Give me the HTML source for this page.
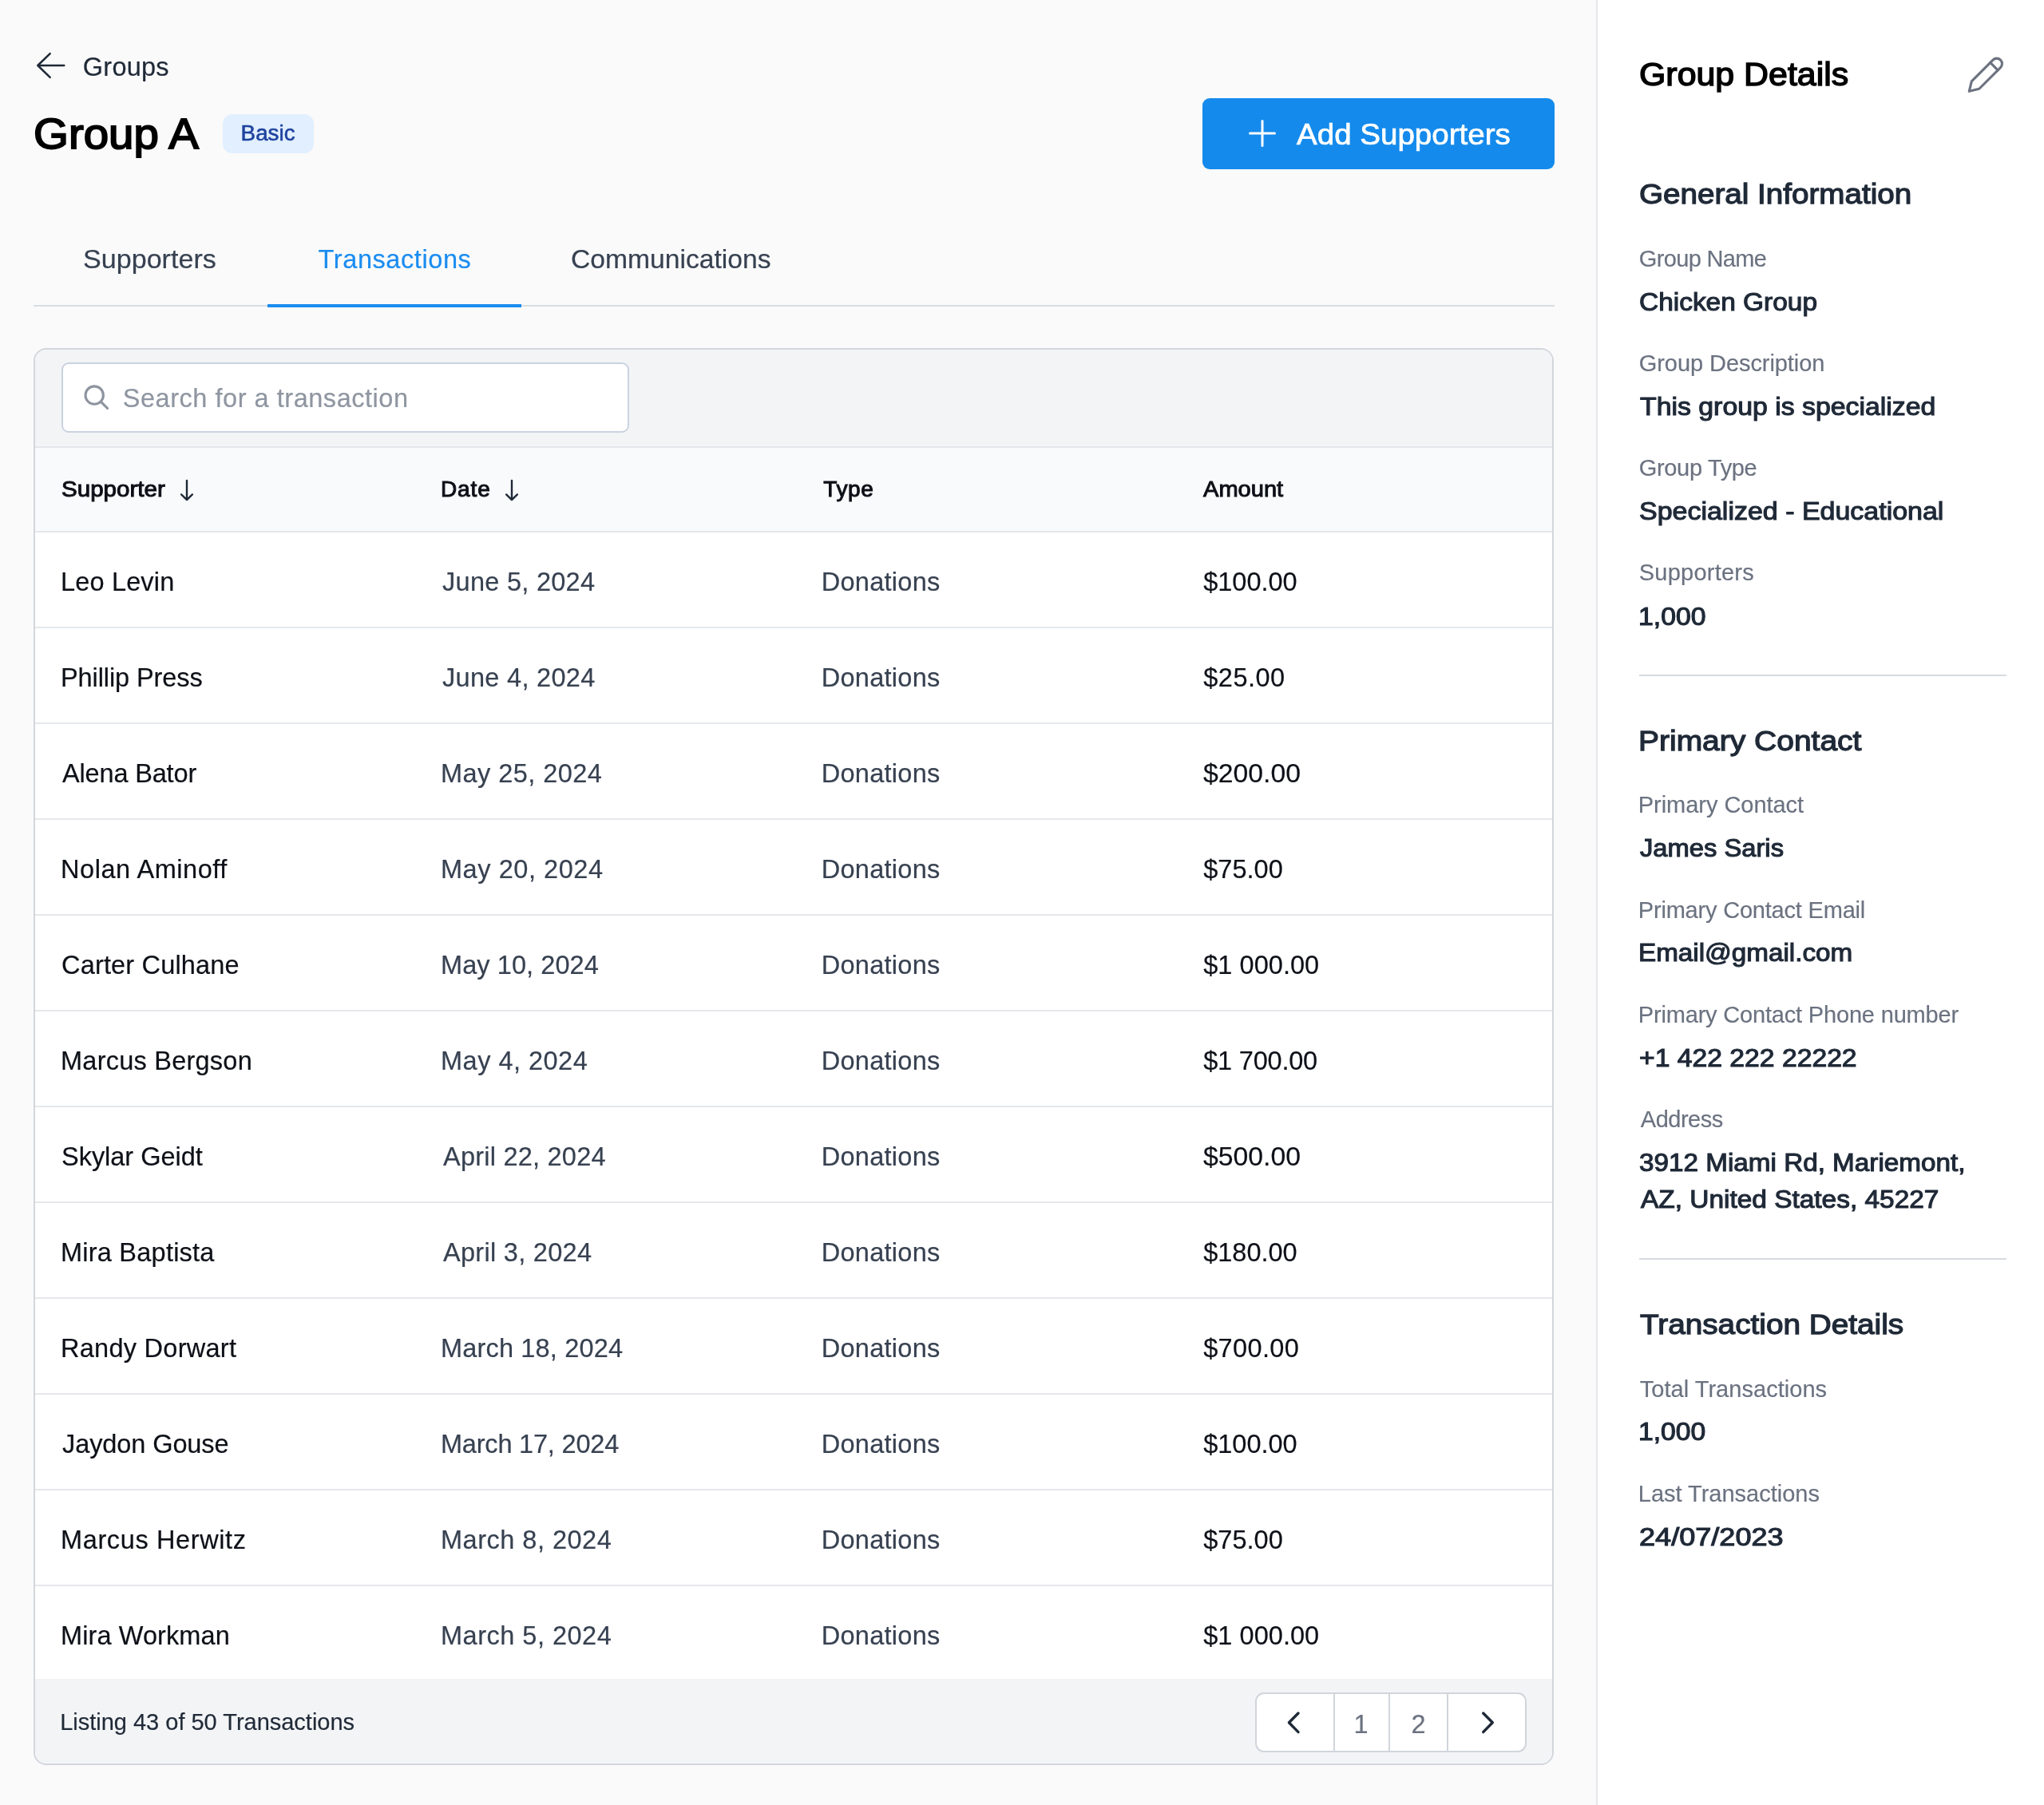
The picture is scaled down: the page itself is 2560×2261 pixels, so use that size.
<!DOCTYPE html>
<html lang="en"><head><meta charset="utf-8"><title>Group A - Transactions</title>
<style>
*{box-sizing:border-box;margin:0;padding:0}
html,body{width:2560px;height:2261px;overflow:hidden}
body{position:relative;background:#fafafa;font-family:"Liberation Sans",sans-serif}
.page{position:absolute;left:0;top:0;width:2560px;height:2261px;will-change:transform}
.page div,.page nav,.page main,.page aside,.page section,.page header{position:absolute}
.t{position:absolute;display:block;white-space:pre;line-height:1;font-weight:400;font-kerning:normal;transform-origin:0 50%}
svg{position:absolute;overflow:visible}
.main{left:0;top:0;width:1999px;height:2261px}
.badge{left:279px;top:143px;width:114px;height:49px;border-radius:12px;background:#e1effe}
.btn{left:1506px;top:123px;width:441px;height:89px;border-radius:9px;background:#148aec}
.tabs{left:42px;top:280px;width:1905px;height:104px;border-bottom:2px solid #d9dde2}
.tabs i{position:absolute;left:293px;top:101px;width:318px;height:4px;background:#1a8cf0}
.card{left:42px;top:436px;width:1904px;height:1775px;border:2px solid #d2d6dc;border-radius:16px;background:#fff;overflow:hidden}
.toolbar{left:0;top:0;width:1900px;height:123px;background:#f3f4f6;border-bottom:2px solid #e3e6ea}
.search{left:33px;top:16px;width:711px;height:88px;border:2px solid #c9d3e0;border-radius:9px;background:#fff}
.thead{left:0;top:123px;width:1900px;height:106px;background:#f9fafb;border-bottom:2px solid #e5e7eb}
.row{left:0;width:1900px;height:120px;border-bottom:2px solid #e5e7eb;background:#fff}
.tfoot{left:0;top:1665px;width:1900px;height:110px;background:#f3f4f6}
.pager{left:1528px;top:17px;width:340px;height:75px;border:2px solid #d1d5db;border-radius:11px;background:#fff;overflow:hidden}
.pager i{position:absolute;top:0;width:2px;height:71px;background:#d1d5db}
.sidebar{left:1999px;top:0;width:561px;height:2261px;background:#fff;border-left:2px solid #e5e7eb}
.sidebar hr{position:absolute;left:52px;width:460px;height:2px;border:0;background:#d7dbe0}
</style></head><body><div class="page">
<main class="main">
<svg class="ic" style="left:44px;top:64px" width="40" height="36" viewBox="44 64 40 36" fill="none" stroke="#1f2937" stroke-width="2.5" stroke-linecap="round" stroke-linejoin="round"><path d="M80.3 82H47.3M62.7 67.2L47.3 82l15.4 14.8"/></svg>
<span class="t" style="left:103.8px;top:66px;font-size:32.5px;line-height:36px;color:#1f2937;-webkit-text-stroke:0.20px #1f2937;letter-spacing:0.24px;">Groups</span><h1 class="t" style="left:42.0px;top:137px;font-size:54.25px;line-height:61px;color:#000;-webkit-text-stroke:1.95px #000;transform:scaleX(1.0400);">Group A</h1>
<div class="badge"><span class="t" style="left:22.6px;top:8px;font-size:27.75px;line-height:31px;color:#1e429f;-webkit-text-stroke:0.56px #1e429f;letter-spacing:0.04px;">Basic</span></div>
<div class="btn"><svg class="ic" style="left:56px;top:25px" width="38" height="38" viewBox="1562 148 38 38" fill="none" stroke="#fff" stroke-width="3" stroke-linecap="round" stroke-linejoin="round"><path d="M1565.5 167h31M1581 151.5v31"/></svg><span class="t" style="left:118.2px;top:25px;font-size:36px;line-height:41px;color:#fff;-webkit-text-stroke:0.72px #fff;transform:scaleX(1.0705);">Add Supporters</span></div>
<nav class="tabs"><span class="t" style="left:62.0px;top:27px;font-size:32.5px;line-height:36px;color:#374151;-webkit-text-stroke:0.20px #374151;transform:scaleX(1.0493);">Supporters</span><span class="t" style="left:356.6px;top:27px;font-size:32.5px;line-height:36px;color:#1a8cf0;-webkit-text-stroke:0.20px #1a8cf0;letter-spacing:0.58px;">Transactions</span><span class="t" style="left:673.0px;top:27px;font-size:32.5px;line-height:36px;color:#374151;-webkit-text-stroke:0.20px #374151;transform:scaleX(1.0354);">Communications</span><i></i></nav>
<section class="card">
<div class="toolbar"><div class="search"><svg class="ic" style="left:25px;top:25px" width="34" height="34" viewBox="104 481 34 34" fill="none" stroke="#8e949f" stroke-width="3.1" stroke-linecap="round" stroke-linejoin="round"><circle cx="118.2" cy="495.1" r="11.2"/><path d="M126.3 503.2l8.3 8.3"/></svg><span class="t" style="left:74.8px;top:25px;font-size:32.5px;line-height:36px;color:#8f96a1;-webkit-text-stroke:0.20px #8f96a1;letter-spacing:0.53px;">Search for a transaction</span></div></div>
<div class="thead"><span class="t" style="left:33.0px;top:36px;font-size:28px;line-height:31px;color:#0d1017;-webkit-text-stroke:1.01px #0d1017;transform:scaleX(1.0556);">Supporter</span><span class="t" style="left:508.0px;top:36px;font-size:28px;line-height:31px;color:#0d1017;-webkit-text-stroke:1.01px #0d1017;letter-spacing:0.88px;">Date</span><span class="t" style="left:987.2px;top:36px;font-size:28px;line-height:31px;color:#0d1017;-webkit-text-stroke:1.01px #0d1017;letter-spacing:0.63px;">Type</span><span class="t" style="left:1463.0px;top:36px;font-size:28px;line-height:31px;color:#0d1017;-webkit-text-stroke:1.01px #0d1017;transform:scaleX(1.0384);">Amount</span><svg class="ic" style="left:179.7px;top:39px" width="20" height="29" viewBox="223.7 600 20 29" fill="none" stroke="#1f2937" stroke-width="2.4" stroke-linecap="round" stroke-linejoin="round"><path d="M233.7 602v24M226.8 619.4l6.9 6.8 6.9-6.8"/></svg><svg class="ic" style="left:587.4px;top:39px" width="20" height="29" viewBox="631.4 600 20 29" fill="none" stroke="#1f2937" stroke-width="2.4" stroke-linecap="round" stroke-linejoin="round"><path d="M641.4 602v24M634.5 619.4l6.9 6.8 6.9-6.8"/></svg></div>
<div class="row" style="top:229px"><span class="t" style="left:32.0px;top:44px;font-size:32.5px;line-height:36px;color:#0d1017;-webkit-text-stroke:0.20px #0d1017;letter-spacing:0.16px;">Leo Levin</span><span class="t" style="left:510.0px;top:44px;font-size:32.5px;line-height:36px;color:#374151;-webkit-text-stroke:0.20px #374151;letter-spacing:0.28px;">June 5, 2024</span><span class="t" style="left:984.8px;top:44px;font-size:32.5px;line-height:36px;color:#374151;-webkit-text-stroke:0.20px #374151;letter-spacing:0.26px;">Donations</span><span class="t" style="left:1463.2px;top:44px;font-size:32.5px;line-height:36px;color:#0d1017;-webkit-text-stroke:0.20px #0d1017;letter-spacing:-0.01px;">$100.00</span></div>
<div class="row" style="top:349px"><span class="t" style="left:32.0px;top:44px;font-size:32.5px;line-height:36px;color:#0d1017;-webkit-text-stroke:0.20px #0d1017;letter-spacing:-0.09px;">Phillip Press</span><span class="t" style="left:510.0px;top:44px;font-size:32.5px;line-height:36px;color:#374151;-webkit-text-stroke:0.20px #374151;letter-spacing:0.30px;">June 4, 2024</span><span class="t" style="left:984.8px;top:44px;font-size:32.5px;line-height:36px;color:#374151;-webkit-text-stroke:0.20px #374151;letter-spacing:0.26px;">Donations</span><span class="t" style="left:1463.2px;top:44px;font-size:32.5px;line-height:36px;color:#0d1017;-webkit-text-stroke:0.20px #0d1017;letter-spacing:0.52px;">$25.00</span></div>
<div class="row" style="top:469px"><span class="t" style="left:34.0px;top:44px;font-size:32.5px;line-height:36px;color:#0d1017;-webkit-text-stroke:0.20px #0d1017;letter-spacing:-0.16px;">Alena Bator</span><span class="t" style="left:508.0px;top:44px;font-size:32.5px;line-height:36px;color:#374151;-webkit-text-stroke:0.20px #374151;letter-spacing:0.44px;">May 25, 2024</span><span class="t" style="left:984.8px;top:44px;font-size:32.5px;line-height:36px;color:#374151;-webkit-text-stroke:0.20px #374151;letter-spacing:0.26px;">Donations</span><span class="t" style="left:1463.2px;top:44px;font-size:32.5px;line-height:36px;color:#0d1017;-webkit-text-stroke:0.20px #0d1017;transform:scaleX(1.0385);">$200.00</span></div>
<div class="row" style="top:589px"><span class="t" style="left:32.0px;top:44px;font-size:32.5px;line-height:36px;color:#0d1017;-webkit-text-stroke:0.20px #0d1017;letter-spacing:0.55px;">Nolan Aminoff</span><span class="t" style="left:508.0px;top:44px;font-size:32.5px;line-height:36px;color:#374151;-webkit-text-stroke:0.20px #374151;letter-spacing:0.55px;">May 20, 2024</span><span class="t" style="left:984.8px;top:44px;font-size:32.5px;line-height:36px;color:#374151;-webkit-text-stroke:0.20px #374151;letter-spacing:0.26px;">Donations</span><span class="t" style="left:1463.2px;top:44px;font-size:32.5px;line-height:36px;color:#0d1017;-webkit-text-stroke:0.20px #0d1017;letter-spacing:0.04px;">$75.00</span></div>
<div class="row" style="top:709px"><span class="t" style="left:33.0px;top:44px;font-size:32.5px;line-height:36px;color:#0d1017;-webkit-text-stroke:0.20px #0d1017;letter-spacing:0.17px;">Carter Culhane</span><span class="t" style="left:508.0px;top:44px;font-size:32.5px;line-height:36px;color:#374151;-webkit-text-stroke:0.20px #374151;letter-spacing:0.08px;">May 10, 2024</span><span class="t" style="left:984.8px;top:44px;font-size:32.5px;line-height:36px;color:#374151;-webkit-text-stroke:0.20px #374151;letter-spacing:0.26px;">Donations</span><span class="t" style="left:1463.2px;top:44px;font-size:32.5px;line-height:36px;color:#0d1017;-webkit-text-stroke:0.20px #0d1017;letter-spacing:0.05px;">$1 000.00</span></div>
<div class="row" style="top:829px"><span class="t" style="left:32.0px;top:44px;font-size:32.5px;line-height:36px;color:#0d1017;-webkit-text-stroke:0.20px #0d1017;letter-spacing:0.24px;">Marcus Bergson</span><span class="t" style="left:508.0px;top:44px;font-size:32.5px;line-height:36px;color:#374151;-webkit-text-stroke:0.20px #374151;letter-spacing:0.49px;">May 4, 2024</span><span class="t" style="left:984.8px;top:44px;font-size:32.5px;line-height:36px;color:#374151;-webkit-text-stroke:0.20px #374151;letter-spacing:0.26px;">Donations</span><span class="t" style="left:1463.2px;top:44px;font-size:32.5px;line-height:36px;color:#0d1017;-webkit-text-stroke:0.20px #0d1017;letter-spacing:-0.20px;">$1 700.00</span></div>
<div class="row" style="top:949px"><span class="t" style="left:33.0px;top:44px;font-size:32.5px;line-height:36px;color:#0d1017;-webkit-text-stroke:0.20px #0d1017;letter-spacing:-0.02px;">Skylar Geidt</span><span class="t" style="left:511.0px;top:44px;font-size:32.5px;line-height:36px;color:#374151;-webkit-text-stroke:0.20px #374151;letter-spacing:0.23px;">April 22, 2024</span><span class="t" style="left:984.8px;top:44px;font-size:32.5px;line-height:36px;color:#374151;-webkit-text-stroke:0.20px #374151;letter-spacing:0.26px;">Donations</span><span class="t" style="left:1463.2px;top:44px;font-size:32.5px;line-height:36px;color:#0d1017;-webkit-text-stroke:0.20px #0d1017;transform:scaleX(1.0385);">$500.00</span></div>
<div class="row" style="top:1069px"><span class="t" style="left:32.0px;top:44px;font-size:32.5px;line-height:36px;color:#0d1017;-webkit-text-stroke:0.20px #0d1017;letter-spacing:0.23px;">Mira Baptista</span><span class="t" style="left:511.0px;top:44px;font-size:32.5px;line-height:36px;color:#374151;-webkit-text-stroke:0.20px #374151;letter-spacing:0.29px;">April 3, 2024</span><span class="t" style="left:984.8px;top:44px;font-size:32.5px;line-height:36px;color:#374151;-webkit-text-stroke:0.20px #374151;letter-spacing:0.26px;">Donations</span><span class="t" style="left:1463.2px;top:44px;font-size:32.5px;line-height:36px;color:#0d1017;-webkit-text-stroke:0.20px #0d1017;letter-spacing:-0.01px;">$180.00</span></div>
<div class="row" style="top:1189px"><span class="t" style="left:32.0px;top:44px;font-size:32.5px;line-height:36px;color:#0d1017;-webkit-text-stroke:0.20px #0d1017;letter-spacing:0.27px;">Randy Dorwart</span><span class="t" style="left:508.0px;top:44px;font-size:32.5px;line-height:36px;color:#374151;-webkit-text-stroke:0.20px #374151;letter-spacing:0.17px;">March 18, 2024</span><span class="t" style="left:984.8px;top:44px;font-size:32.5px;line-height:36px;color:#374151;-webkit-text-stroke:0.20px #374151;letter-spacing:0.26px;">Donations</span><span class="t" style="left:1463.2px;top:44px;font-size:32.5px;line-height:36px;color:#0d1017;-webkit-text-stroke:0.20px #0d1017;letter-spacing:0.35px;">$700.00</span></div>
<div class="row" style="top:1309px"><span class="t" style="left:34.0px;top:44px;font-size:32.5px;line-height:36px;color:#0d1017;-webkit-text-stroke:0.20px #0d1017;letter-spacing:-0.09px;">Jaydon Gouse</span><span class="t" style="left:508.0px;top:44px;font-size:32.5px;line-height:36px;color:#374151;-webkit-text-stroke:0.20px #374151;letter-spacing:-0.20px;">March 17, 2024</span><span class="t" style="left:984.8px;top:44px;font-size:32.5px;line-height:36px;color:#374151;-webkit-text-stroke:0.20px #374151;letter-spacing:0.26px;">Donations</span><span class="t" style="left:1463.2px;top:44px;font-size:32.5px;line-height:36px;color:#0d1017;-webkit-text-stroke:0.20px #0d1017;letter-spacing:-0.01px;">$100.00</span></div>
<div class="row" style="top:1429px"><span class="t" style="left:32.0px;top:44px;font-size:32.5px;line-height:36px;color:#0d1017;-webkit-text-stroke:0.20px #0d1017;letter-spacing:0.62px;">Marcus Herwitz</span><span class="t" style="left:508.0px;top:44px;font-size:32.5px;line-height:36px;color:#374151;-webkit-text-stroke:0.20px #374151;letter-spacing:0.50px;">March 8, 2024</span><span class="t" style="left:984.8px;top:44px;font-size:32.5px;line-height:36px;color:#374151;-webkit-text-stroke:0.20px #374151;letter-spacing:0.26px;">Donations</span><span class="t" style="left:1463.2px;top:44px;font-size:32.5px;line-height:36px;color:#0d1017;-webkit-text-stroke:0.20px #0d1017;letter-spacing:0.04px;">$75.00</span></div>
<div class="row" style="top:1549px"><span class="t" style="left:32.0px;top:44px;font-size:32.5px;line-height:36px;color:#0d1017;-webkit-text-stroke:0.20px #0d1017;letter-spacing:0.10px;">Mira Workman</span><span class="t" style="left:508.0px;top:44px;font-size:32.5px;line-height:36px;color:#374151;-webkit-text-stroke:0.20px #374151;letter-spacing:0.50px;">March 5, 2024</span><span class="t" style="left:984.8px;top:44px;font-size:32.5px;line-height:36px;color:#374151;-webkit-text-stroke:0.20px #374151;letter-spacing:0.26px;">Donations</span><span class="t" style="left:1463.2px;top:44px;font-size:32.5px;line-height:36px;color:#0d1017;-webkit-text-stroke:0.20px #0d1017;letter-spacing:0.05px;">$1 000.00</span></div>
<div class="tfoot"><span class="t" style="left:31.2px;top:38px;font-size:29px;line-height:32px;color:#1f2937;-webkit-text-stroke:0.17px #1f2937;letter-spacing:-0.01px;">Listing 43 of 50 Transactions</span>
<div class="pager"><svg class="ic" style="left:36px;top:20px" width="22" height="32" viewBox="1610 2142 22 32" fill="none" stroke="#1f2937" stroke-width="3.4" stroke-linecap="round" stroke-linejoin="round"><path d="M1626 2146l-11.6 11.8 11.6 11.8"/></svg><i style="left:96px"></i><span class="t" style="left:121.5px;top:20px;font-size:32.5px;line-height:36px;color:#6b7280;-webkit-text-stroke:0.20px #6b7280;">1</span><i style="left:165px"></i><span class="t" style="left:193.5px;top:20px;font-size:32.5px;line-height:36px;color:#6b7280;-webkit-text-stroke:0.20px #6b7280;">2</span><i style="left:238px"></i><svg class="ic" style="left:278px;top:20px" width="22" height="32" viewBox="1852 2142 22 32" fill="none" stroke="#1f2937" stroke-width="3.4" stroke-linecap="round" stroke-linejoin="round"><path d="M1857.7 2146l11.6 11.8-11.6 11.8"/></svg></div></div>
</section></main>
<aside class="sidebar">
<svg class="ic" style="left:459px;top:68px" width="54" height="52" viewBox="2460 68 54 52" fill="none" stroke="#6b7280" stroke-width="3.1" stroke-linecap="round" stroke-linejoin="round"><g transform="translate(2500.8 79.8) rotate(45)"><path d="M-6.7 0a6.7 6.7 0 0 1 13.4 0v37.8L0 48.8l-6.7-11z"/><path d="M-6.7 4.8h13.4"/></g></svg>
<h2 class="t" style="left:51.8px;top:71px;font-size:40.25px;line-height:45px;color:#000;-webkit-text-stroke:1.45px #000;transform:scaleX(1.0655);">Group Details</h2><h3 class="t" style="left:51.8px;top:223px;font-size:35px;line-height:39px;color:#1f2937;-webkit-text-stroke:1.26px #1f2937;transform:scaleX(1.1031);">General Information</h3><span class="t k" style="left:51.8px;top:308px;font-size:29px;line-height:32px;color:#6b7280;-webkit-text-stroke:0.17px #6b7280;letter-spacing:-0.65px;">Group Name</span><span class="t v" style="left:51.8px;top:361px;font-size:31px;line-height:35px;color:#1f2937;-webkit-text-stroke:1.12px #1f2937;transform:scaleX(1.0785);">Chicken Group</span><span class="t k" style="left:51.8px;top:439px;font-size:29px;line-height:32px;color:#6b7280;-webkit-text-stroke:0.17px #6b7280;letter-spacing:-0.07px;">Group Description</span><span class="t v" style="left:52.8px;top:492px;font-size:31px;line-height:35px;color:#1f2937;-webkit-text-stroke:1.12px #1f2937;transform:scaleX(1.0912);">This group is specialized</span><span class="t k" style="left:51.8px;top:570px;font-size:29px;line-height:32px;color:#6b7280;-webkit-text-stroke:0.17px #6b7280;letter-spacing:-0.34px;">Group Type</span><span class="t v" style="left:51.8px;top:623px;font-size:31px;line-height:35px;color:#1f2937;-webkit-text-stroke:1.12px #1f2937;transform:scaleX(1.0957);">Specialized - Educational</span><span class="t k" style="left:51.8px;top:701px;font-size:29px;line-height:32px;color:#6b7280;-webkit-text-stroke:0.17px #6b7280;letter-spacing:0.22px;">Supporters</span><span class="t v" style="left:50.8px;top:755px;font-size:31px;line-height:35px;color:#1f2937;-webkit-text-stroke:1.12px #1f2937;transform:scaleX(1.0892);">1,000</span><h3 class="t" style="left:50.8px;top:908px;font-size:35px;line-height:39px;color:#1f2937;-webkit-text-stroke:1.26px #1f2937;transform:scaleX(1.1136);">Primary Contact</h3><span class="t k" style="left:50.8px;top:992px;font-size:29px;line-height:32px;color:#6b7280;-webkit-text-stroke:0.17px #6b7280;letter-spacing:-0.04px;">Primary Contact</span><span class="t v" style="left:52.8px;top:1045px;font-size:31px;line-height:35px;color:#1f2937;-webkit-text-stroke:1.12px #1f2937;transform:scaleX(1.0554);">James Saris</span><span class="t k" style="left:50.8px;top:1124px;font-size:29px;line-height:32px;color:#6b7280;-webkit-text-stroke:0.17px #6b7280;letter-spacing:-0.20px;">Primary Contact Email</span><span class="t v" style="left:50.8px;top:1176px;font-size:31px;line-height:35px;color:#1f2937;-webkit-text-stroke:1.12px #1f2937;transform:scaleX(1.0719);">Email@gmail.com</span><span class="t k" style="left:50.8px;top:1255px;font-size:29px;line-height:32px;color:#6b7280;-webkit-text-stroke:0.17px #6b7280;letter-spacing:-0.18px;">Primary Contact Phone number</span><span class="t v" style="left:51.8px;top:1308px;font-size:31px;line-height:35px;color:#1f2937;-webkit-text-stroke:1.12px #1f2937;transform:scaleX(1.0868);">+1 422 222 22222</span><span class="t k" style="left:53.8px;top:1386px;font-size:29px;line-height:32px;color:#6b7280;-webkit-text-stroke:0.17px #6b7280;letter-spacing:-0.50px;">Address</span><span class="t v" style="left:51.8px;top:1439px;font-size:31px;line-height:35px;color:#1f2937;-webkit-text-stroke:1.12px #1f2937;transform:scaleX(1.0727);">3912 Miami Rd, Mariemont,</span><span class="t v" style="left:53.8px;top:1485px;font-size:31px;line-height:35px;color:#1f2937;-webkit-text-stroke:1.12px #1f2937;transform:scaleX(1.0780);">AZ, United States, 45227</span><h3 class="t" style="left:52.8px;top:1639px;font-size:35px;line-height:39px;color:#1f2937;-webkit-text-stroke:1.26px #1f2937;transform:scaleX(1.1070);">Transaction Details</h3><span class="t k" style="left:52.8px;top:1724px;font-size:29px;line-height:32px;color:#6b7280;-webkit-text-stroke:0.17px #6b7280;letter-spacing:0.03px;">Total Transactions</span><span class="t v" style="left:50.8px;top:1776px;font-size:31px;line-height:35px;color:#1f2937;-webkit-text-stroke:1.12px #1f2937;transform:scaleX(1.0865);">1,000</span><span class="t k" style="left:50.8px;top:1855px;font-size:29px;line-height:32px;color:#6b7280;-webkit-text-stroke:0.17px #6b7280;letter-spacing:-0.01px;">Last Transactions</span><span class="t v" style="left:51.8px;top:1908px;font-size:31px;line-height:35px;color:#1f2937;-webkit-text-stroke:1.12px #1f2937;transform:scaleX(1.1642);">24/07/2023</span>
<hr style="top:845px"><hr style="top:1576px">
</aside>
</div></body></html>
